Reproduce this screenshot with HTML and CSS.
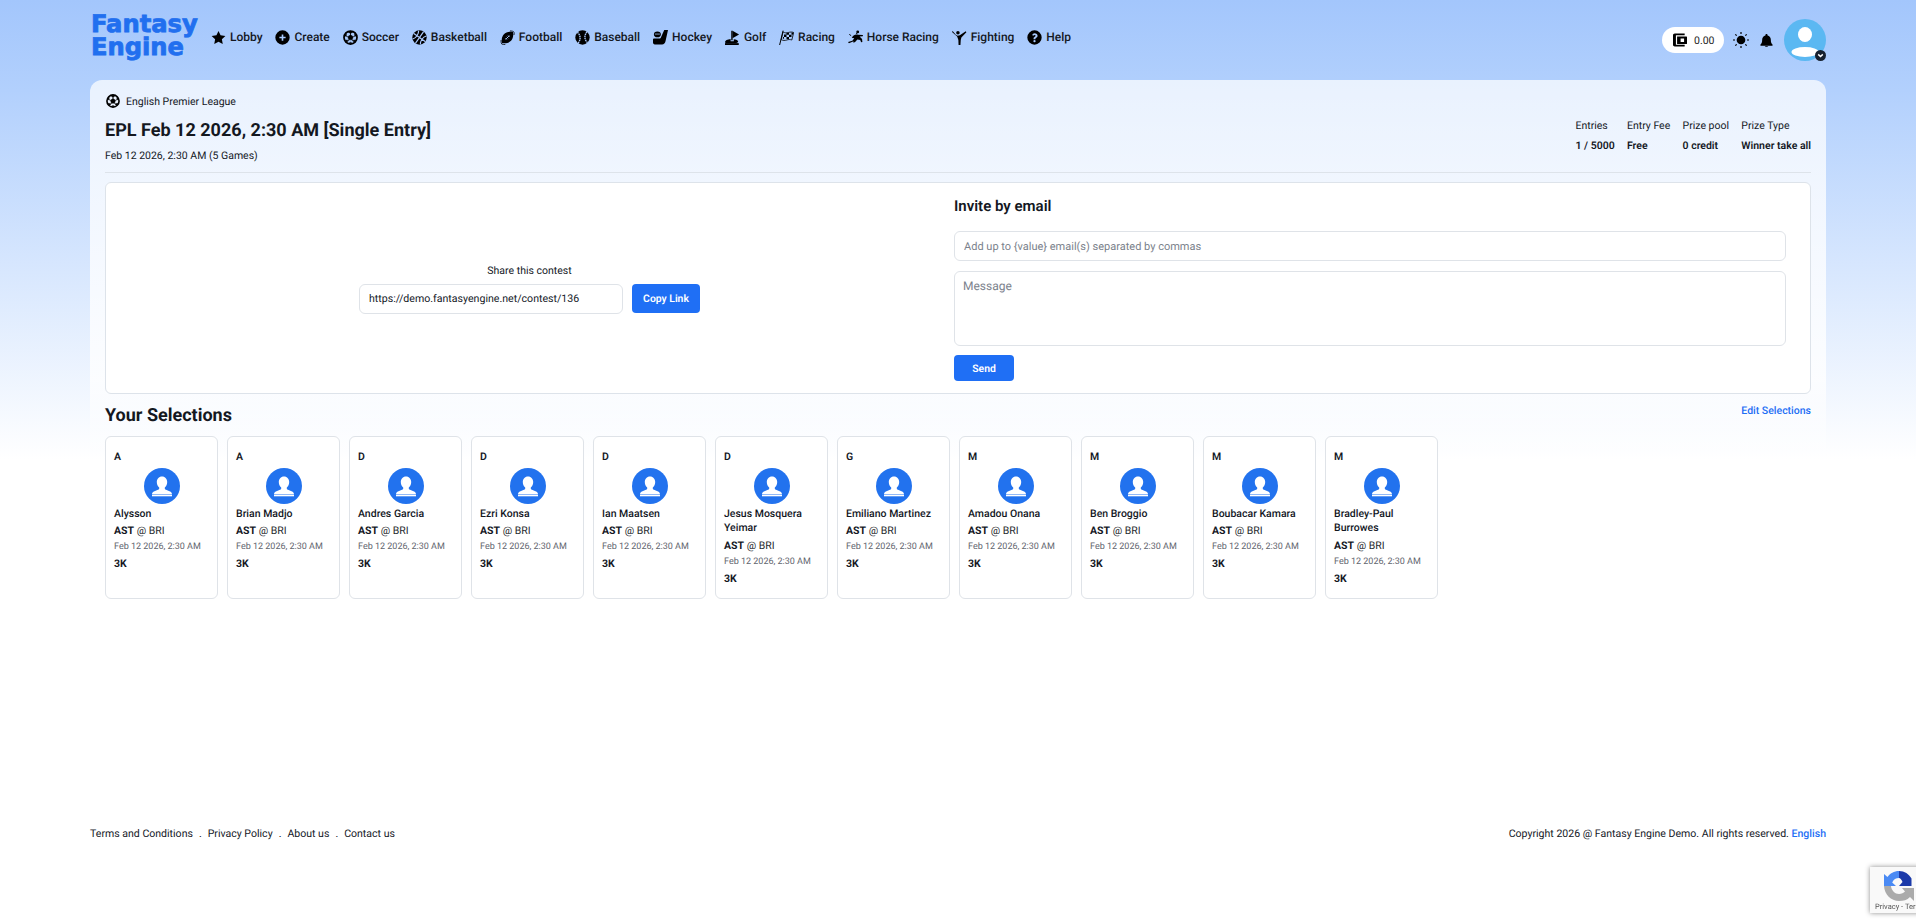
FILE: index.html
```html
<!DOCTYPE html>
<html lang="en">
<head>
<meta charset="utf-8">
<title>Fantasy Engine</title>
<link rel="stylesheet" href="styles.css">
</head>
<body>
<svg class="sprite" aria-hidden="true">
  <symbol id="i-soccer" viewBox="0 0 24 24">
    <circle cx="12" cy="12" r="10.4" fill="none" stroke="#000" stroke-width="2.8"/>
    <path d="M12 7.6l4.300 3.100-1.600 5H9.300l-1.600-5zM12 2v3.600l-3.800-2.600zM12 2v3.600l3.800-2.600zM22 9l-3 1-.6-4.500zM2 9l3 1 .6-4.500zM6 19.500l2-3-4.500-.6zM18 19.500l-2-3 4.500-.6zM8.500 21.500l3.500-2 3.500 2z" stroke="#000" stroke-width=".8"/>
    <path d="M12 5v3M7.500 10.500L4.500 9.500M16.500 10.500l3-1M9.300 15.700l-2 3M14.700 15.700l2 3" stroke="#000" stroke-width="1.200"/>
  </symbol>
  <symbol id="i-basket" viewBox="0 0 24 24">
    <circle cx="12" cy="12" r="11.500"/>
    <path d="M1 12h22M12 1v22M4.500 3.800c3.600 4.500 3.600 11.900 0 16.400M19.500 3.800c-3.600 4.500-3.600 11.900 0 16.400" fill="none" stroke="#aac9fd" stroke-width="1.900" transform="rotate(35 12 12)"/>
  </symbol>
  <symbol id="i-football" viewBox="0 0 24 24">
    <path d="M20.800 3.200C15 2.200 9.400 3.600 6.300 6.700 3.300 9.700 2 15 3.200 20.800c5.800 1 11.300-.3 14.500-3.500 3-3 4.200-8.500 3.100-14.100z"/>
    <path d="M9 15l6-6M10.800 10.800l2.400 2.400M13 8.800l2.200 2.200M8.800 13l2.200 2.200" stroke="#aac9fd" stroke-width="1.400" fill="none"/>
    <path d="M16 1.500c3 0 5.400.4 6.500 2 .3 1.800.3 3-.2 4.500M1.700 16c-.3 2.500 0 4.700 1 6.300 1.700 1 3.800 1.300 5.800 1" fill="none" stroke="#000" stroke-width="1.300"/>
  </symbol>
  <symbol id="i-baseball" viewBox="0 0 24 24">
    <circle cx="12" cy="12" r="11.500"/>
    <path d="M5 2.500c4.500 5 4.500 12.500-1.500 17.500M20.500 4c-6 5-6 12.500-1.500 17.500" fill="none" stroke="#aac9fd" stroke-width="2.200" stroke-dasharray="2.400 1" transform="rotate(-8 12 12)"/>
  </symbol>
  <symbol id="i-hockey" viewBox="0 0 24 24">
    <ellipse cx="7" cy="7" rx="5.500" ry="4.500"/>
    <path d="M18 0h6l-4 18c-.6 3-2.500 5-5.500 5H3c-2 0-3-1.200-3-3v-5c0-1 .6-1.500 1.500-1.500h9c1 0 1.700 0 2.100-1.500z"/>
    <path d="M3 6.500h8" stroke="#aac9fd" stroke-width="1.200"/>
  </symbol>
  <symbol id="i-golf" viewBox="0 0 24 24">
    <path d="M10 1h2.200v15.500H10z"/>
    <path d="M12 1l10.500 6-10.500 6z"/>
    <path d="M9 14.500v3.500h5v-3.200c4 .4 7 1.700 7 3.500 0 1.400-2 2.500-5 3H2c-1.200-.5-2-1.300-2-2.200 0-2 3.800-4 9-4.600z"/>
    <path d="M0 21h22v3H0z"/>
  </symbol>
  <symbol id="i-racing" viewBox="0 0 24 24">
    <path d="M1 24L6.500 1" stroke="#000" stroke-width="1.600" fill="none"/>
    <path d="M6.500 3c3 2 6 2 8.500 1 3-1 6-1 8.500 0l-3 12c-3-1-5.500-1-8 0-3 1-6 1-9-.5z" fill="none" stroke="#000" stroke-width="1.300"/>
    <path d="M8 7h4v4H8zM12 4.500h4v3h-4zM16 7.500h4v3.500h-4zM12 11h4v3.500h-4zM8 11v3h-2l.5-3z"/>
    <path d="M20 4h3l-1 3.500h-2z"/>
  </symbol>
  <symbol id="i-horse" viewBox="0 0 24 24">
    <circle cx="15.500" cy="3" r="2.300"/>
    <path d="M0 19l7-2 3-4-4-.5 2-3c3-2 6-2.500 8-2l8 .5-.5 2-5 .5 4 4 .5 4.500-2 .5-1.500-3.500-4.500-1-4 4.500-3 .5 1-2-7.500 3z"/>
    <path d="M5 9l-3-2M13 6l4-3" stroke="#000" stroke-width="1.500"/>
  </symbol>
  <symbol id="i-fight" viewBox="0 0 24 24">
    <circle cx="9.500" cy="4.500" r="2.800"/>
    <path d="M1 1.500l5 6 3 1.500 3.500-.5L22 2l1 1.500-8 8.500-1 4-.5 8h-3l-.3-8-2-5.500L0 3z"/>
  </symbol>
  <symbol id="i-person" viewBox="0 0 36 36">
    <circle cx="18" cy="18" r="18" fill="#2272ee"/>
    <path d="M18 8.500c3.200 0 5.200 2.500 5.200 5.500 0 2.200-1 4.400-2.400 5.500v1.300c0 1 3 1.600 5.300 2.700 1.300.6 1.900 1.500 1.900 3H8c0-1.500.6-2.400 1.900-3 2.300-1.100 5.300-1.700 5.300-2.700v-1.300c-1.400-1.100-2.400-3.300-2.400-5.500 0-3 2-5.500 5.200-5.500z" fill="#fff"/>
    <rect x="8" y="27" width="20" height="1.300" fill="#fff"/>
  </symbol>
</svg>

<header class="topbar">
  <a class="logo">Fantasy<br>Engine</a>
  <nav class="nav">
    <a class="nav-item"><svg class="nav-icon" viewBox="0 0 24 24"><path d="M12 1.500l3.300 7 7.700 1-5.600 5.300 1.400 7.700-6.800-3.800-6.800 3.800 1.400-7.700L1 9.500l7.700-1z"/></svg>Lobby</a>
    <a class="nav-item"><svg class="nav-icon" viewBox="0 0 24 24"><path fill-rule="evenodd" d="M12 .5a11.500 11.500 0 1 0 0 23 11.500 11.500 0 0 0 0-23zM10.700 7h2.600v3.700H17v2.600h-3.700V17h-2.600v-3.700H7v-2.600h3.700z"/></svg>Create</a>
    <a class="nav-item"><svg class="nav-icon"><use href="#i-soccer"/></svg>Soccer</a>
    <a class="nav-item"><svg class="nav-icon"><use href="#i-basket"/></svg>Basketball</a>
    <a class="nav-item"><svg class="nav-icon"><use href="#i-football"/></svg>Football</a>
    <a class="nav-item"><svg class="nav-icon"><use href="#i-baseball"/></svg>Baseball</a>
    <a class="nav-item"><svg class="nav-icon"><use href="#i-hockey"/></svg>Hockey</a>
    <a class="nav-item"><svg class="nav-icon"><use href="#i-golf"/></svg>Golf</a>
    <a class="nav-item"><svg class="nav-icon"><use href="#i-racing"/></svg>Racing</a>
    <a class="nav-item"><svg class="nav-icon"><use href="#i-horse"/></svg>Horse Racing</a>
    <a class="nav-item"><svg class="nav-icon"><use href="#i-fight"/></svg>Fighting</a>
    <a class="nav-item"><svg class="nav-icon" viewBox="0 0 24 24"><path fill-rule="evenodd" d="M12 .5a11.500 11.500 0 1 0 0 23 11.500 11.500 0 0 0 0-23zM12.200 5c2.700 0 4.700 1.600 4.700 4 0 1.800-1 2.700-2.200 3.500-.9.600-1.200 1-1.200 1.800v.4h-3v-.7c0-1.500.6-2.300 1.800-3.100.9-.6 1.500-1 1.500-1.800 0-.8-.7-1.300-1.600-1.300-1 0-1.700.6-2.200 1.500L8.200 8.100C9 6.200 10.300 5 12.200 5zM12 16a1.800 1.800 0 1 1 0 3.600 1.800 1.800 0 0 1 0-3.600z"/></svg>Help</a>
  </nav>
  <div class="user-tools">
    <div class="wallet">
      <svg class="wallet-icon" viewBox="0 0 24 24"><path fill-rule="evenodd" d="M3 1h17v3H5v16h15v3H3c-1.500 0-3-1.200-3-3V4c0-1.800 1.300-3 3-3zM7 6h16c.6 0 1 .4 1 1v11c0 .6-.4 1-1 1H7zm6 3.500v6h6v-6z"/></svg>
      <span>0.00</span>
    </div>
    <svg class="sun" viewBox="0 0 24 24"><circle cx="12" cy="12" r="6.500"/><path d="M12 0v3M12 21v3M0 12h3M21 12h3M3.500 3.500l2 2M18.500 18.500l2 2M20.500 3.500l-2 2M5.500 18.500l-2 2" stroke="#000" stroke-width="1.800"/></svg>
    <svg class="bell" viewBox="0 0 24 24"><path d="M12 0c1.100 0 2 .9 2 2v.7c3.600.9 6 4 6 7.800 0 4.700 1 6.800 3.300 9.500.5.600 0 1.500-.8 1.500H1.500c-.8 0-1.300-.9-.8-1.500C3 17.300 4 15.200 4 10.500c0-3.800 2.400-6.900 6-7.800V2c0-1.100.9-2 2-2zM9 22.500h6c0 .9-1.300 1.500-3 1.500s-3-.6-3-1.500z"/></svg>
    <div class="avatar">
      <svg class="avatar-art" viewBox="0 0 42 42"><circle cx="21" cy="21" r="21" fill="#5bb8f2"/><ellipse cx="21" cy="15.500" rx="7" ry="7.500" fill="#fff"/><ellipse cx="21" cy="33" rx="13.500" ry="5" fill="#fff"/></svg>
      <span class="avatar-badge"><svg viewBox="0 0 12 12"><path d="M3.500 4.800L6 7.200l2.500-2.400" fill="none" stroke="#fff" stroke-width="1.600"/></svg></span>
    </div>
  </div>
</header>

<main class="panel">
  <section class="contest-head">
    <div class="contest-info">
      <div class="league"><svg class="league-icon"><use href="#i-soccer"/></svg>English Premier League</div>
      <h1 class="contest-title">EPL Feb 12 2026, 2:30 AM [Single Entry]</h1>
      <div class="contest-date">Feb 12 2026, 2:30 AM (5 Games)</div>
    </div>
    <dl class="stats">
      <div class="stat"><dt>Entries</dt><dd>1 / 5000</dd></div>
      <div class="stat"><dt>Entry Fee</dt><dd>Free</dd></div>
      <div class="stat"><dt>Prize pool</dt><dd>0 credit</dd></div>
      <div class="stat"><dt>Prize Type</dt><dd>Winner take all</dd></div>
    </dl>
  </section>

  <section class="share-card">
    <div class="share">
      <div class="share-label">Share this contest</div>
      <div class="share-row">
        <input class="field url-field" value="https://demo.fantasyengine.net/contest/136">
        <button class="btn copy-btn">Copy Link</button>
      </div>
    </div>
    <form class="invite">
      <h2 class="invite-title">Invite by email</h2>
      <input class="field email-field" placeholder="Add up to {value} email(s) separated by commas">
      <textarea class="field message-field" placeholder="Message"></textarea>
      <button class="btn send-btn" type="button">Send</button>
    </form>
  </section>

  <section class="selections">
    <div class="selections-head">
      <h2 class="selections-title">Your Selections</h2>
      <a class="edit-link">Edit Selections</a>
    </div>
    <div class="player-list" id="players">
      <article class="player"><div class="pos">A</div><svg class="player-pic"><use href="#i-person"/></svg><div class="pname">Alysson</div><div class="match"><b>AST</b> @ BRI</div><div class="when">Feb 12 2026, 2:30 AM</div><div class="price">3K</div></article>
      <article class="player"><div class="pos">A</div><svg class="player-pic"><use href="#i-person"/></svg><div class="pname">Brian Madjo</div><div class="match"><b>AST</b> @ BRI</div><div class="when">Feb 12 2026, 2:30 AM</div><div class="price">3K</div></article>
      <article class="player"><div class="pos">D</div><svg class="player-pic"><use href="#i-person"/></svg><div class="pname">Andres Garcia</div><div class="match"><b>AST</b> @ BRI</div><div class="when">Feb 12 2026, 2:30 AM</div><div class="price">3K</div></article>
      <article class="player"><div class="pos">D</div><svg class="player-pic"><use href="#i-person"/></svg><div class="pname">Ezri Konsa</div><div class="match"><b>AST</b> @ BRI</div><div class="when">Feb 12 2026, 2:30 AM</div><div class="price">3K</div></article>
      <article class="player"><div class="pos">D</div><svg class="player-pic"><use href="#i-person"/></svg><div class="pname">Ian Maatsen</div><div class="match"><b>AST</b> @ BRI</div><div class="when">Feb 12 2026, 2:30 AM</div><div class="price">3K</div></article>
      <article class="player"><div class="pos">D</div><svg class="player-pic"><use href="#i-person"/></svg><div class="pname">Jesus Mosquera Yeimar</div><div class="match"><b>AST</b> @ BRI</div><div class="when">Feb 12 2026, 2:30 AM</div><div class="price">3K</div></article>
      <article class="player"><div class="pos">G</div><svg class="player-pic"><use href="#i-person"/></svg><div class="pname">Emiliano Martinez</div><div class="match"><b>AST</b> @ BRI</div><div class="when">Feb 12 2026, 2:30 AM</div><div class="price">3K</div></article>
      <article class="player"><div class="pos">M</div><svg class="player-pic"><use href="#i-person"/></svg><div class="pname">Amadou Onana</div><div class="match"><b>AST</b> @ BRI</div><div class="when">Feb 12 2026, 2:30 AM</div><div class="price">3K</div></article>
      <article class="player"><div class="pos">M</div><svg class="player-pic"><use href="#i-person"/></svg><div class="pname">Ben Broggio</div><div class="match"><b>AST</b> @ BRI</div><div class="when">Feb 12 2026, 2:30 AM</div><div class="price">3K</div></article>
      <article class="player"><div class="pos">M</div><svg class="player-pic"><use href="#i-person"/></svg><div class="pname">Boubacar Kamara</div><div class="match"><b>AST</b> @ BRI</div><div class="when">Feb 12 2026, 2:30 AM</div><div class="price">3K</div></article>
      <article class="player"><div class="pos">M</div><svg class="player-pic"><use href="#i-person"/></svg><div class="pname">Bradley-Paul Burrowes</div><div class="match"><b>AST</b> @ BRI</div><div class="when">Feb 12 2026, 2:30 AM</div><div class="price">3K</div></article>
    </div>
  </section>
</main>

<footer class="footer">
  <div class="footer-links"><a>Terms and Conditions</a><span>.</span><a>Privacy Policy</a><span>.</span><a>About us</a><span>.</span><a>Contact us</a></div>
  <div class="copyright">Copyright 2026 @ Fantasy Engine Demo. All rights reserved. <a class="lang">English</a></div>
</footer>

<aside class="recaptcha">
  <svg class="recaptcha-logo" viewBox="0 0 32 32">
    <path d="M16 1c-5 0-9 2.500-11.500 6L1 4v12h12l-3.800-3.600C10.500 9.500 13 8 16 8z" fill="#4a8af4"/>
    <path d="M16 1c5.500 0 10 3 12.500 7.500V16H16l3.500-4C18.500 9.500 17 8 16 8z" fill="#1c3aa9"/>
    <path d="M1 16h7c.5 4.500 4 8 8 8 2.500 0 4.500-1 6-2.500L19 18h12v13l-4-4c-3 3-6.500 4-11 4C8 31 1.500 24.500 1 16z" fill="#ababab"/>
  </svg>
  <div class="recaptcha-text">Privacy - Terms</div>
</aside>
</body>
</html>
```

FILE: styles.css
```css
* { box-sizing: border-box; }

html, body { height: 100%; }

body {
  margin: 0;
  min-height: 923px;
  display: flex;
  flex-direction: column;
  overflow: hidden;
  font-family: Roboto, "Liberation Sans", sans-serif;
  font-size: 10.500px;
  text-rendering: geometricPrecision;
  color: #14181f;
  background: linear-gradient(180deg, #a3c6fc 0, #b2d0fd 90px, #ffffff 460px) no-repeat;
  background-color: #fff;
}

.sprite { display: none; }

a { color: inherit; text-decoration: none; }

h1, h2, dl, dd { margin: 0; }

/* Top bar */
.topbar {
  height: 80px;
  flex: none;
  padding: 13px 90px 0;
  display: flex;
  align-items: flex-start;
}

.logo {
  width: 109px;
  margin-right: 12px;
  padding-left: 1px;
  font-family: "DejaVu Sans", sans-serif;
  font-weight: 700;
  font-size: 24.200px;
  line-height: 23px;
  -webkit-text-stroke: 0.8px #216fef;
  color: #216fef;
}

.nav {
  display: flex;
  gap: 12.900px;
  height: 48px;
  align-items: center;
}

.nav-item {
  display: flex;
  align-items: center;
  gap: 4px;
  font-size: 12px;
  font-weight: 500;
  white-space: nowrap;
}

.nav-icon { width: 15px; height: 15px; fill: #000; flex: none; }

.user-tools {
  margin-left: auto;
  margin-top: 6px;
  display: flex;
  align-items: center;
}

.wallet {
  width: 62px;
  height: 26px;
  border-radius: 13px;
  background: #fff;
  padding-left: 11px;
  display: flex;
  align-items: center;
  gap: 7px;
  color: #222;
}

.wallet-icon { width: 14px; height: 14px; fill: #000; }

.sun { width: 16px; height: 16px; margin-left: 9px; fill: #000; }

.bell { width: 13px; height: 15px; margin-left: 11px; fill: #000; }

.avatar { position: relative; width: 42px; height: 42px; margin-left: 11px; }

.avatar-art { display: block; width: 42px; height: 42px; }

.avatar-badge {
  position: absolute;
  right: 0;
  bottom: 0;
  width: 11px;
  height: 11px;
  border-radius: 50%;
  background: #16202e;
}

.avatar-badge svg { display: block; width: 11px; height: 11px; }

/* Main panel */
.panel {
  flex: 1;
  margin: 0 90px;
  padding: 15px 15px 0;
  border-radius: 12px 12px 0 0;
  background: linear-gradient(180deg, rgba(255,255,255,.72) 0, rgba(255,255,255,.8) 300px, rgba(255,255,255,0) 400px);
}

.contest-head {
  height: 78px;
  border-bottom: 1px solid #dde3ea;
  display: flex;
  justify-content: space-between;
}

.league {
  display: flex;
  align-items: center;
  gap: 6px;
  padding-left: 1px;
  height: 14px;
  margin-top: -1px;
}

.league-icon { width: 14px; height: 14px; fill: #000; }

.contest-title {
  margin-top: 11px;
  font-size: 18.050px;
  line-height: 24px;
  font-weight: 700;
}

.contest-date { margin-top: 6px; line-height: 14px; }

.stats {
  display: flex;
  gap: 12.300px;
  padding-top: 24px;
}

.stat dt { line-height: 14px; }

.stat dd { margin-top: 5.500px; line-height: 14px; font-weight: 600; white-space: nowrap; }

/* Share card */
.share-card {
  margin-top: 9px;
  height: 212px;
  background: #fff;
  border: 1px solid #dde3ea;
  border-radius: 6px;
  display: grid;
  grid-template-columns: 848px 1fr;
}

.share {
  display: flex;
  flex-direction: column;
  align-items: center;
  justify-content: center;
  padding: 0 1px 2px 0;
}

.share-label { line-height: 14px; margin: 3px 0 6px; }

.share-row { display: flex; gap: 9px; align-items: flex-start; }

.field {
  display: block;
  border: 1px solid #dfe3e8;
  border-radius: 6px;
  background: #fff;
  font-family: inherit;
  font-size: 10.600px;
  text-rendering: geometricPrecision;
  color: #14181f;
  outline: none;
  resize: none;
}

.field::placeholder { color: #7b828c; }

.url-field { width: 264px; height: 30px; padding: 0 9px; }

.btn {
  border: 0;
  border-radius: 4px;
  background: #1f6ff5;
  color: #fff;
  font-family: inherit;
  font-size: 10.400px;
  font-weight: 600;
  text-rendering: geometricPrecision;
}

.copy-btn { width: 68px; height: 29px; padding: 0; }

.invite { padding: 14px 24px 0 0; }

.invite-title { font-size: 15px; line-height: 18px; font-weight: 600; }

.email-field { width: 100%; height: 30px; margin-top: 16px; padding: 0 9px; font-size: 11px; }

.message-field { width: 100%; height: 75px; margin-top: 10px; padding: 7px 8px; font-size: 12px; }

.send-btn { display: block; width: 60px; height: 26px; margin-top: 9px; padding: 0; }

/* Selections */
.selections { margin-top: 11px; }

.selections-head {
  display: flex;
  justify-content: space-between;
  align-items: flex-start;
  height: 31px;
}

.selections-title { font-size: 18px; line-height: 22px; font-weight: 700; }

.edit-link { color: #1f6ff5; font-weight: 500; line-height: 14px; margin-top: -1px; }

.player-list { display: flex; gap: 9px; }

.player {
  width: 113px;
  padding: 12px 8px;
  background: #fff;
  border: 1px solid #dfe3e8;
  border-radius: 6px;
}

.pos { font-weight: 600; line-height: 16px; }

.player-pic { display: block; width: 36px; height: 36px; margin: 3px auto 0; }

.pname { margin-top: 3px; font-weight: 500; line-height: 14.400px; }

.match { margin-top: 3px; line-height: 14px; color: #26292e; }

.match b { font-weight: 700; color: #14181f; }

.when { margin-top: 2px; font-size: 9px; line-height: 14px; color: #5f656e; white-space: nowrap; }

.price { margin-top: 3px; line-height: 14px; font-weight: 700; }

/* Footer */
.footer {
  flex: none;
  padding: 0 90px 82px;
  display: flex;
  justify-content: space-between;
  font-size: 10.550px;
  line-height: 14px;
}

.footer-links { display: flex; gap: 6px; }

.lang { color: #1f6ff5; font-weight: 500; }

/* reCAPTCHA badge */
.recaptcha {
  position: fixed;
  left: 1870px;
  top: 867px;
  width: 256px;
  height: 46px;
  background: #f9f9f9;
  box-shadow: 0 0 5px rgba(0,0,0,.45);
}

.recaptcha-logo { display: block; width: 32px; height: 32px; margin: 3px 0 0 13px; }

.recaptcha-text { margin-left: 5px; font-size: 7.500px; line-height: 9px; color: #555; }
```
